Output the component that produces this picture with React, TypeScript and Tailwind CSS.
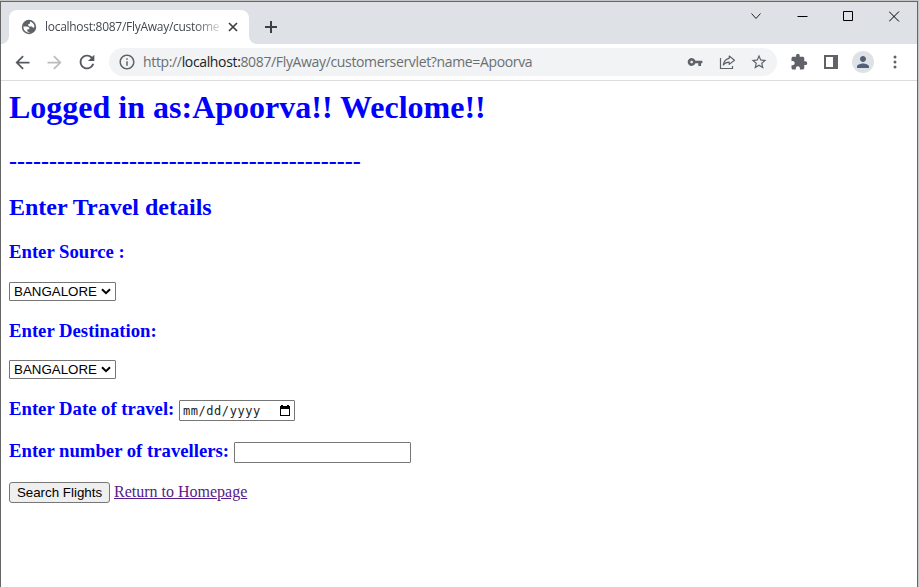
import React from "react";
import {
  MdArrowBack, MdArrowForward, MdRefresh, MdInfoOutline, MdVpnKey, MdStarBorder,
  MdExtension, MdPerson,
} from "react-icons/md";

function TabStrip() {
  return (
    <div className="flex h-[42px] bg-[#dee1e6]">
      <div className="flex w-2 items-end">
        <svg width="8" height="8"><path d="M8 0V8H0A8 8 0 0 0 8 0Z" fill="#fff" /></svg>
      </div>
      <div className="mt-2 flex h-[34px] w-[240px] items-center rounded-t-lg bg-white pl-3">
        <svg width="16" height="16" viewBox="0 0 16 16">
          <circle cx="8" cy="8" r="7.2" fill="#5f6368" />
          <path d="M2.4 7.6H5.4C7.4 7.6 8.6 8.6 8.4 10.2H6.4V12.6L9.4 13.4C5.6 14.4 2.2 11.6 2.4 7.6Z" fill="#fff" />
          <path d="M9 2.5C11.6 3 13.4 5.2 13.5 8C12.8 9.2 11.4 8.9 11 7.6H9.2C7.8 7.6 7 6.8 7.2 5.2L9 4.6Z" fill="#fff" />
        </svg>
        <div className="ml-2 w-[178px] whitespace-nowrap text-[12px] leading-[18px] tracking-[-0.28px] text-[#45494d] [mask-image:linear-gradient(to_right,black_150px,transparent_180px)]">
          localhost:8087/FlyAway/custome
        </div>
        <svg className="ml-[5px]" width="10" height="10" viewBox="0 0 10 10"><path d="M1 1L9 9M9 1L1 9" stroke="#3c4043" strokeWidth="1.7" /></svg>
      </div>
      <div className="flex w-2 items-end">
        <svg width="8" height="8"><path d="M0 0V8H8A8 8 0 0 1 0 0Z" fill="#fff" /></svg>
      </div>
      <svg className="ml-2 mt-[19px]" width="12" height="12"><path d="M6 0V12M0 6H12" stroke="#3c4043" strokeWidth="2" /></svg>
      <div className="ml-auto mr-[17px] mt-[9px] flex items-start gap-[35px]">
        <svg width="12" height="11" viewBox="0 0 12 11"><path d="M1.5 2.5L6 7.5L10.5 2.5" fill="none" stroke="#222" /></svg>
        <svg width="11" height="11"><path d="M0.5 5.5H10.5" stroke="#000" /></svg>
        <svg width="11" height="11"><path d="M.5 .5H9.5V9.5H.5Z" fill="none" stroke="#000" /></svg>
        <svg width="11" height="11"><path d="M0 .5L10 10.5M10 .5L0 10.5" stroke="#000" /></svg>
      </div>
    </div>
  );
}

function Toolbar() {
  return (
    <div className="flex h-[37px] items-center border-b border-[#dadce0] bg-white pl-[11px]">
      <MdArrowBack size={21} color="#55595e" />
      <MdArrowForward className="ml-[11px]" size={21} color="#babcbe" />
      <MdRefresh className="ml-[11px]" size={22} color="#55595e" />
      <div className="ml-[11px] flex h-7 w-[668px] items-center rounded-full bg-[#f1f3f4] pl-[9px]">
        <MdInfoOutline size={18} color="#5f6368" />
        <div className="ml-[7px] whitespace-nowrap text-[14px] leading-5 tracking-[-0.35px] text-[#6b6f73]">
          http://<span className="text-[#202124]">localhost:</span>8087/FlyAway/customerservlet?name=Apoorva
        </div>
        <div className="ml-auto mr-[9px] flex items-center">
          <MdVpnKey size={16} color="#5f6368" />
          <svg className="ml-4" width="17" height="16" viewBox="0 0 17 16" fill="none" stroke="#5f6368" strokeWidth="1.2">
            <path d="M1.5 4V14.5H13.5V12" />
            <path d="M10.2 2L15.5 6.2L10.2 10.4V8.2C7.5 8.2 5.8 9 4.3 11C4.8 7.5 6.8 4.8 10.2 4.3Z" strokeLinejoin="round" />
          </svg>
          <MdStarBorder className="ml-[14px]" size={18} color="#5f6368" />
        </div>
      </div>
      <MdExtension className="ml-[13px]" size={18} color="#5f6368" />
      <svg className="ml-4" width="14" height="14"><path fillRule="evenodd" d="M0 0H14V14H0ZM2 2V12H9V2Z" fill="#5f6368" /></svg>
      <div className="ml-[14px] flex h-[22px] w-[22px] items-center justify-center rounded-full bg-[#dee1e6]">
        <MdPerson size={18} color="#51607a" />
      </div>
      <svg className="ml-[19px]" width="4" height="14" fill="#5f6368"><circle cx="2" cy="2" r="1.5" /><circle cx="2" cy="7" r="1.5" /><circle cx="2" cy="12" r="1.5" /></svg>
    </div>
  );
}

function CitySelect() {
  return (
    <div className="flex h-[19px] w-[107px] items-center rounded-[1px] border border-[#767676] bg-white pl-1 font-['Liberation_Sans',Arial,sans-serif] text-[13.33px] font-normal leading-[17px] text-black">
      <span>BANGALORE</span>
      <svg className="ml-auto mr-1" width="10" height="7" viewBox="0 0 10 7"><path d="M1 1.2L5 5.2L9 1.2" fill="none" stroke="#000" strokeWidth="2" /></svg>
    </div>
  );
}

function TravelForm() {
  return (
    <main className="pl-2 pt-2 font-['Liberation_Serif','Times_New_Roman',serif] font-bold text-[#0000ff]">
      <h1 className="h-[37px] text-[32px] leading-[37px]">Logged in as:Apoorva!! Weclome!!</h1>
      <h2 className="mt-[22px] h-[27px] text-[24px] leading-[27px]">--------------------------------------------</h2>
      <h2 className="mt-[19px] h-[27px] text-[24px] leading-[27px]">Enter Travel details</h2>
      <h3 className="mt-5 mb-5 h-[21px] text-[18.72px] leading-[21px]">Enter Source :</h3>
      <CitySelect />
      <h3 className="my-[19px] h-[21px] text-[18.72px] leading-[21px]">Enter Destination:</h3>
      <CitySelect />
      <div className="mt-[21px] flex h-[21px] text-[18.72px] leading-[19px]">
        <h3 className="w-[170px] -translate-y-px">Enter Date of travel:</h3>
        <div className="flex h-[21px] w-[116px] items-center rounded-[1px] border border-[#767676] pl-[3px] font-['DejaVu_Sans_Mono',monospace] text-[12px] font-normal tracking-[0.55px] text-[#222]">
          <span className="pt-0.5">mm/dd/yyyy</span>
          <svg className="ml-auto mr-[3px]" width="12" height="12"><path fillRule="evenodd" d="M1 1H2V0H4V1H8V0H10V1H11V11H1ZM2 4V10H10V4Z" fill="#000" /></svg>
        </div>
      </div>
      <div className="mt-[21px] flex h-[21px] text-[18.72px] leading-[19px]">
        <h3 className="w-[225px] -translate-y-px">Enter number of travellers:</h3>
        <input className="h-[21px] w-[177px] rounded-[1px] border border-[#767676] bg-white" />
      </div>
      <div className="mt-[19px] flex items-center gap-1 font-normal">
        <button className="h-[21px] w-[101px] rounded-[3px] border border-[#767676] bg-[#efefef] font-['Liberation_Sans',Arial,sans-serif] text-[13.33px] leading-[18px] text-black">Search Flights</button>
        <a className="-mt-px text-[16px] leading-[18px] text-[#551a8b] underline">Return to Homepage</a>
      </div>
    </main>
  );
}

export default function App() {
  return (
    <div className="h-[587px] w-[919px] overflow-hidden bg-[#c4c4c4] pr-px pt-px font-['Open_Sans','Noto_Sans',sans-serif]">
      <div className="h-[586px] border-x border-t border-[#666] bg-white">
        <TabStrip />
        <Toolbar />
        <TravelForm />
      </div>
    </div>
  );
}
